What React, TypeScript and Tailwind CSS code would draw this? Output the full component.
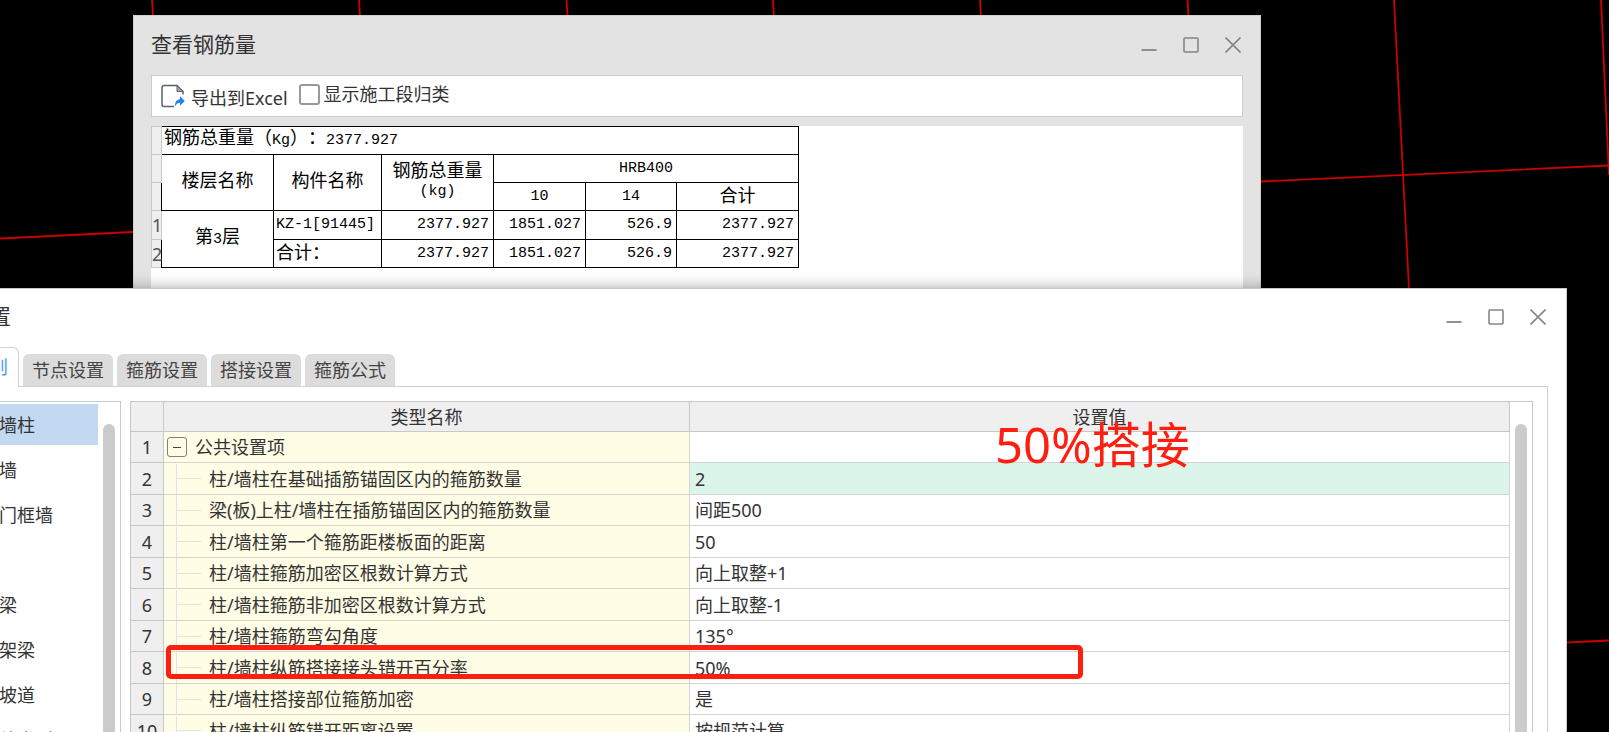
import { useState } from 'react';

const uiFont = "font-['Noto_Sans','Noto_Sans_CJK_SC',sans-serif]";
const gridFont = "font-['Liberation_Mono','Noto_Sans_CJK_SC',monospace]";

const tabs = ['节点设置', '箍筋设置', '搭接设置', '箍筋公式'];

const categories = ['墙柱', '墙', '门框墙', '', '梁', '架梁', '坡道', '他类型'];

const settings = [
    { name: '柱/墙柱在基础插筋锚固区内的箍筋数量', value: '2' },
    { name: '梁(板)上柱/墙柱在插筋锚固区内的箍筋数量', value: '间距500' },
    { name: '柱/墙柱第一个箍筋距楼板面的距离', value: '50' },
    { name: '柱/墙柱箍筋加密区根数计算方式', value: '向上取整+1' },
    { name: '柱/墙柱箍筋非加密区根数计算方式', value: '向上取整-1' },
    { name: '柱/墙柱箍筋弯勾角度', value: '135°' },
    { name: '柱/墙柱纵筋搭接接头错开百分率', value: '50%' },
    { name: '柱/墙柱搭接部位箍筋加密', value: '是' },
    { name: '柱/墙柱纵筋错开距离设置', value: '按规范计算' },
];

function WindowButtons() {
    return (
        <div className="flex gap-[26px] text-[#858585]">
            <button aria-label="最小化" className="size-4">
                <svg viewBox="0 0 16 16" className="size-4" fill="none" stroke="currentColor" strokeWidth="1.8">
                    <path d="M.5 13h15" />
                </svg>
            </button>
            <button aria-label="最大化" className="size-4">
                <svg viewBox="0 0 16 16" className="size-4" fill="none" stroke="currentColor" strokeWidth="1.6">
                    <rect x="1" y="1" width="14" height="14" rx="1" />
                </svg>
            </button>
            <button aria-label="关闭" className="size-4">
                <svg viewBox="0 0 16 16" className="size-4" fill="none" stroke="currentColor" strokeWidth="1.6">
                    <path d="M.5 .5l15 15M15.5 .5l-15 15" />
                </svg>
            </button>
        </div>
    );
}

function ExportIcon() {
    return (
        <svg viewBox="0 0 24 24" className="size-6" fill="none">
            <path d="M13 22.500H3a2 2 0 0 1-2-2v-17a2 2 0 0 1 2-2h13l6 6v3" stroke="#59616e" strokeWidth="1.500" />
            <path d="M16 1.500V7.500h6z" fill="#a4a9b1" stroke="#59616e" />
            <path d="M14 22.500c0-4.500 1.500-7 5-7.300V12.300l4.800 4.700-4.800 4.700v-2.900c-2.200 0-3.500 1-5 3.700z" fill="#1f83f0" />
        </svg>
    );
}

// Axis grid of the model view behind the windows
function AxisGrid() {
    return (
        <svg viewBox="0 0 1609 732" className="absolute inset-0 size-full" stroke="#cc0000" strokeWidth="1.8">
            <path d="M152 0l1 16M359 0l1 16M566.500 0l1 16M773 0l1 16M980 0l1 16M1187.500 0l1 16" />
            <path d="M1394 0l15 289M1601 0l8 175" />
            <path d="M0 238.500l133-6.500M1261 181.500l348-16M1567 642.500l42-2" />
        </svg>
    );
}

function ReportTable() {
    const num = 'border border-black pr-1 text-right';
    const cjk = 'text-lg leading-5';
    const gutter = `${uiFont} border border-[#c8c8c8] bg-[#efefef] text-lg leading-5 font-normal text-[#555]`;
    return (
        <table className={`${gridFont} w-[647px] table-fixed border-collapse bg-white text-[15px] leading-5 text-black`}>
            <colgroup>
                <col className="w-[10px]" />
                <col className="w-[112px]" />
                <col className="w-[108px]" />
                <col className="w-[112px]" />
                <col className="w-[92px]" />
                <col className="w-[91px]" />
                <col className="w-[122px]" />
            </colgroup>
            <tbody>
                <tr className="h-[28px]">
                    <th className={gutter} />
                    <td colSpan={6} className="border border-black pb-[2px] pl-[2px] [text-spacing-trim:space-all]">
                        <span className={cjk}>钢筋总重量（</span>Kg<span className={cjk}>）：</span>2377.927
                    </td>
                </tr>
                <tr className="h-[28px]">
                    <th className={gutter} />
                    <th rowSpan={2} className={`border border-black pb-[2px] font-normal ${cjk}`}>楼层名称</th>
                    <th rowSpan={2} className={`border border-black pb-[2px] font-normal ${cjk}`}>构件名称</th>
                    <th rowSpan={2} className="border border-black pb-[2px] font-normal">
                        <span className={`block ${cjk}`}>钢筋总重量</span>(kg)
                    </th>
                    <th colSpan={3} className="border border-black font-normal">HRB400</th>
                </tr>
                <tr className="h-[28px]">
                    <th className={gutter} />
                    <th className="border border-black font-normal">10</th>
                    <th className="border border-black font-normal">14</th>
                    <th className={`border border-black font-normal ${cjk}`}>合计</th>
                </tr>
                <tr className="h-[29px]">
                    <th className={gutter}>1</th>
                    <td rowSpan={2} className={`border border-black text-center ${cjk}`}>
                        第<span className="text-[15px]">3</span>层
                    </td>
                    <td className="border border-black pl-[2px]">KZ-1[91445]</td>
                    <td className={num}>2377.927</td>
                    <td className={num}>1851.027</td>
                    <td className={num}>526.9</td>
                    <td className={num}>2377.927</td>
                </tr>
                <tr className="h-[28px]">
                    <th className={gutter}>2</th>
                    <td className={`border border-black pl-[2px] ${cjk}`}>合计：</td>
                    <td className={num}>2377.927</td>
                    <td className={num}>1851.027</td>
                    <td className={num}>526.9</td>
                    <td className={num}>2377.927</td>
                </tr>
            </tbody>
        </table>
    );
}

function ReportWindow() {
    const [grouped, setGrouped] = useState(false);

    return (
        <section className="absolute top-[15px] right-[348px] left-[133px] flex h-[320px] flex-col border border-[#cfcfcf] bg-[#e3e3e3] px-[17px]">
            <header className="flex h-[59px] items-center justify-between pr-[2px] pb-[2px]">
                <h2 className="text-[21px] text-[#333]">查看钢筋量</h2>
                <WindowButtons />
            </header>
            <div className="flex h-[42px] items-center border border-[#c6ccd1] bg-white px-[9px] text-lg leading-6 text-[#333]">
                <button className="flex items-center gap-[6px]">
                    <ExportIcon />
                    <span className="pt-1">导出到Excel</span>
                </button>
                <label className="ml-[11px] flex items-center gap-1 pb-1">
                    <input
                        type="checkbox"
                        checked={grouped}
                        onChange={(e) => setGrouped(e.target.checked)}
                        className="size-[21px] appearance-none rounded-[3px] border-2 border-[#999] bg-white checked:bg-[#2f86e8]"
                    />
                    显示施工段归类
                </label>
            </div>
            <div className="mt-[9px] flex-1 bg-white">
                <ReportTable />
            </div>
        </section>
    );
}

function CategoryList() {
    const [current, setCurrent] = useState(0);

    return (
        <div className="flex w-[123px] shrink-0 justify-between border-t border-r border-[#c8c8c8] pr-[5px]">
            <ul className="w-[100px] pt-[2px]">
                {categories.map((item, i) => (
                    <li key={i} className="flex h-[45px] items-start">
                        <button
                            onClick={() => setCurrent(i)}
                            className={`h-[41px] w-full pl-px text-left ${i === current ? 'bg-[#c2d9f1]' : ''}`}
                        >
                            {item}
                        </button>
                    </li>
                ))}
            </ul>
            <div className="mt-[22px] w-3 rounded-t-full bg-[#cbcbcb]" />
        </div>
    );
}

function SettingsTable() {
    const index = 'border border-[#c8c8c8] bg-[#efefef] text-center font-normal';
    return (
        <table className="w-full table-fixed border-collapse">
            <colgroup>
                <col className="w-[33px]" />
                <col className="w-[526px]" />
                <col />
            </colgroup>
            <thead>
                <tr className="h-[30px] bg-[#efefef]">
                    <th className="border border-[#c8c8c8]" />
                    <th className="border border-[#c8c8c8] font-normal">类型名称</th>
                    <th className="border border-[#c8c8c8] font-normal">设置值</th>
                </tr>
            </thead>
            <tbody>
                <tr className="h-[31px]">
                    <th className={index}>1</th>
                    <td className="border border-[#d4d4d4] bg-[#fffde6] pl-[3px]">
                        <div className="flex items-center gap-2">
                            <button
                                aria-label="折叠"
                                className="flex size-5 items-center justify-center rounded-[3px] border border-[#808080]"
                            >
                                <span className="h-px w-2 bg-[#444]" />
                            </button>
                            公共设置项
                        </div>
                    </td>
                    <td className="border border-[#d4d4d4]" />
                </tr>
                {settings.map((row, i) => (
                    <tr key={row.name} className={i % 2 === 0 ? 'h-8' : 'h-[31px]'}>
                        <th className={index}>{i + 2}</th>
                        <td className="border border-[#d4d4d4] bg-[#fffde6] pl-3">
                            <div className="flex h-[30px] items-center gap-2 border-l border-[#e2e2e2]">
                                <span className="h-px w-6 bg-[#e2e2e2]" />
                                {row.name}
                            </div>
                        </td>
                        <td className={`border border-[#d4d4d4] pl-[5px] ${i === 0 ? 'bg-[#dcf5ea]' : 'bg-white'}`}>
                            {row.value}
                        </td>
                    </tr>
                ))}
            </tbody>
        </table>
    );
}

function SettingsWindow() {
    return (
        <section className="absolute top-[288px] right-[42px] bottom-0 -left-[2px] flex flex-col overflow-hidden border-t border-r border-[#c8c8c8] bg-white shadow-[0_0_14px_rgba(0,0,0,0.35)]">
            <header className="flex h-[58px] shrink-0 items-center justify-between pr-5 pb-[2px]">
                <h2 className="-ml-[8px] text-[21px] text-[#333]">置</h2>
                <WindowButtons />
            </header>
            <nav className="flex h-[39px] shrink-0 items-end gap-1 text-lg leading-[30px]">
                <button className="h-[39px] w-[21px] overflow-hidden rounded-tr-md border-t border-r border-[#ced2d6] bg-white text-[#3a9cf5]">
                    <span className="-ml-[8px] block w-[18px]">则</span>
                </button>
                {tabs.map((tab) => (
                    <button key={tab} className="h-8 rounded-t-md bg-[#dcdcdc] px-[9px] text-[#444]">
                        {tab}
                    </button>
                ))}
            </nav>
            <div className="mr-[18px] ml-[20px] h-px shrink-0 bg-[#ced2d6]" />
            <div className="mr-[18px] flex min-h-0 flex-1 gap-[9px] border-r border-[#ced2d6] pt-[14px] pr-[14px] text-lg leading-[26px] text-[#333]">
                <CategoryList />
                <div className="flex min-w-0 flex-1 border-t border-r border-[#c8c8c8] pr-[5px]">
                    <div className="-mt-px min-w-0 flex-1">
                        <SettingsTable />
                    </div>
                    <div className="mt-[22px] ml-[5px] w-3 shrink-0 rounded-t-full bg-[#cbcbcb]" />
                </div>
            </div>
        </section>
    );
}

export default function App() {
    return (
        <main className={`relative h-screen overflow-hidden bg-black ${uiFont}`}>
            <AxisGrid />
            <ReportWindow />
            <SettingsWindow />

            {/* Markup drawn over the windows */}
            <div className="pointer-events-none absolute top-[645px] left-[166px] h-[34px] w-[917px] rounded-[5px] border-5 border-[#ff1e10]" />
            <p className="pointer-events-none absolute top-[411px] left-[995px] text-[49px] leading-[66px] text-[#ff1e10]">
                50%搭接
            </p>
        </main>
    );
}
